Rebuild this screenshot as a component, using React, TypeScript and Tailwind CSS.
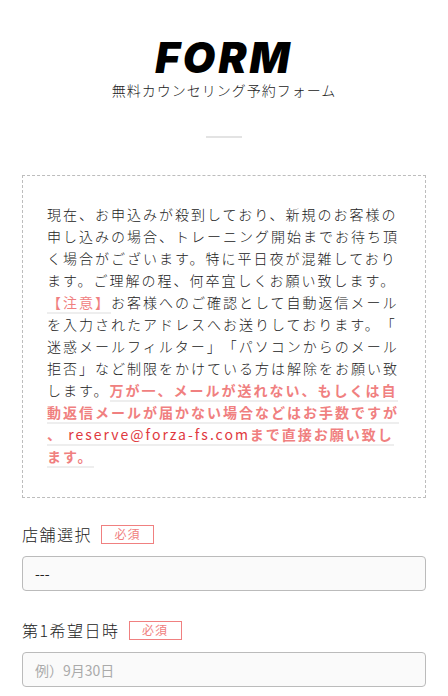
import React from "react";

const jp = "font-['Noto_Sans_CJK_JP','Noto_Sans',sans-serif] [text-spacing-trim:space-all]";

function Required() {
  return (
    <span className="ml-[9px] inline-flex h-[19px] w-[53px] items-center justify-center border border-[#f08080] text-[12px] leading-none tracking-[1px] text-[#f08080]">
      必須
    </span>
  );
}

export default function App() {
  return (
    <div className={`${jp} min-h-screen bg-white px-[22px] pt-[37px] pb-10 text-[#222]`}>
      <header className="flex flex-col items-center">
        <h1 className="font-['Inter',sans-serif] text-[42px] font-black italic leading-none tracking-[3px] text-black">
          FORM
        </h1>
        <p className="mt-[1px] text-[14px] font-light leading-5 tracking-[1px]">無料カウンセリング予約フォーム</p>
        <div className="mt-[36px] h-[2px] w-[36px] bg-[#e3e3e3]" />
      </header>

      <div className="mt-[37px] border border-dashed border-[#bdbdbd] px-[24px] pt-[27px] pb-[30px]">
        <p className="text-[14px] font-light leading-[22px] tracking-[2px] [line-break:anywhere]">
          現在、お申込みが殺到しており、新規のお客様の申し込みの場合、トレーニング開始までお待ち頂く場合がございます。特に平日夜が混雑しております。ご理解の程、何卒宜しくお願い致します。
          <span className="border-b-2 border-[#eee] font-normal text-[#f08080]">【注意】</span>
          お客様へのご確認として自動返信メールを入力されたアドレスへお送りしております。「迷惑メールフィルター」「パソコンからのメール拒否」など制限をかけている方は解除をお願い致します。
          <span className="border-b-2 border-[#eee] font-bold text-[#f08080]">
            万が一、メールが送れない、もしくは自動返信メールが届かない場合などはお手数ですが、
            <span className="font-normal text-[#e0393e]"> reserve@forza-fs.com</span>
            まで直接お願い致します。
          </span>
        </p>
      </div>

      <div className="mt-[24px]">
        <div className="flex items-center">
          <span className="text-[16px] font-light leading-6 tracking-[1.5px]">店舗選択</span>
          <Required />
        </div>
        <div className="mt-[10px] flex h-[35px] items-center rounded-[4px] border border-[#bbb] bg-[#fafafa] px-[12px] text-[14px]">
          ---
        </div>
      </div>

      <div className="mt-[27px]">
        <div className="flex items-center">
          <span className="text-[16px] font-light leading-6 tracking-[1.5px]">第1希望日時</span>
          <Required />
        </div>
        <input
          className="mt-[10px] block h-[35px] w-full rounded-[4px] border border-[#bbb] bg-[#fafafa] px-[12px] text-[14px] outline-none placeholder:text-[#aaa]"
          placeholder="例）9月30日"
        />
      </div>
    </div>
  );
}
